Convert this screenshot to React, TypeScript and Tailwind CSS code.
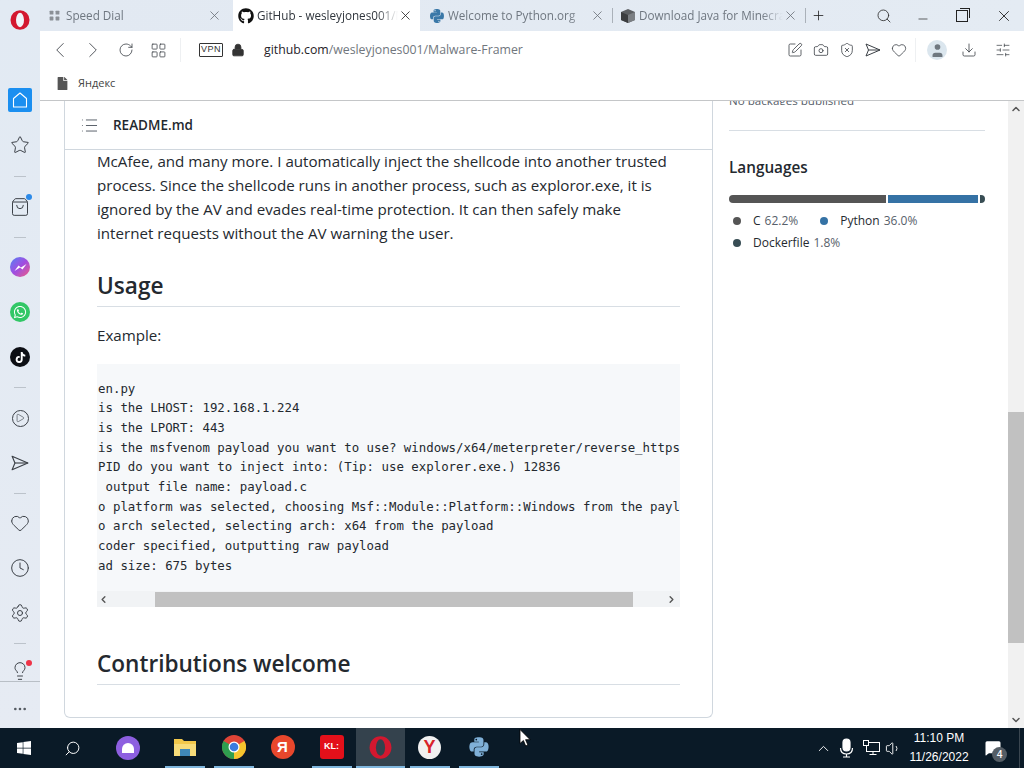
import {
  ChevronLeft, ChevronRight, RotateCw, LayoutGrid, Lock, Download, SlidersHorizontal, X, Plus, Search, Minus,
  Camera, ShieldX, Heart, Star, Clock, Settings, Lightbulb, MoreHorizontal, List, ChevronUp, ChevronDown,
  Volume1, MessageSquare, Play, ShoppingBag, SquarePen, User,
} from 'lucide-react'
import { FaGithub, FaWindows, FaWhatsapp, FaTiktok, FaPython, FaFile } from 'react-icons/fa'

const codeLines = [
  'en.py',
  'is the LHOST: 192.168.1.224',
  'is the LPORT: 443',
  'is the msfvenom payload you want to use? windows/x64/meterpreter/reverse_https',
  'PID do you want to inject into: (Tip: use explorer.exe.) 12836',
  ' output file name: payload.c',
  'o platform was selected, choosing Msf::Module::Platform::Windows from the payload',
  'o arch selected, selecting arch: x64 from the payload',
  'coder specified, outputting raw payload',
  'ad size: 675 bytes',
]

function OperaLogo({ size = 20, hole = '#f0f4f9' }: { size?: number; hole?: string }) {
  return (
    <svg width={size} height={size} viewBox="0 0 20 20">
      <ellipse cx="10" cy="10" rx="9.5" ry="9.8" fill="#d3182f" />
      <ellipse cx="10" cy="10" rx="4" ry="7.2" fill={hole} />
    </svg>
  )
}

function PlaneIcon({ size }: { size: number }) {
  return (
    <svg width={size} height={size} viewBox="0 0 16 16" fill="none" stroke="#3a3f45" strokeWidth="1" strokeLinejoin="round">
      <path d="M1 2l14 6-14 6 2.5-6z" />
      <path d="M3.5 8H15" />
    </svg>
  )
}

function Tab({ icon, title, pad, grey, active }: { icon: React.ReactNode; title: string; pad: string; grey?: boolean; active?: boolean }) {
  return (
    <div className={`flex h-full items-center ${pad} ${active ? 'ml-px w-[187px] bg-white' : 'w-[192px]'}`}>
      <div className="flex w-[17px] shrink-0 justify-center">{icon}</div>
      <span
        className={`ml-[3px] min-w-0 flex-1 overflow-hidden whitespace-nowrap text-[11.7px] [mask-image:linear-gradient(to_right,black_85%,transparent)] ${
          grey ? 'text-[#6f7780]' : 'text-[#30363d]'
        }`}
      >
        {title}
      </span>
      <X size={15} strokeWidth={1.3} className={active ? 'text-[#222]' : 'text-[#6a7078]'} />
    </div>
  )
}

function Cube() {
  return (
    <svg width="16" height="16" viewBox="0 0 16 16">
      <path d="M8 1l7 3v8l-7 3-7-3V4z" fill="#5c5f62" />
      <path d="M8 7l7-3v8l-7 3z" fill="#7b7f83" />
      <path d="M1 4l7 3v8l-7-3z" fill="#3c3e40" />
    </svg>
  )
}

function SideItem({ children, h = 'h-[45px]' }: { children: React.ReactNode; h?: string }) {
  return <div className={`flex w-full shrink-0 items-center justify-center ${h}`}>{children}</div>
}

function Sep({ h }: { h: string }) {
  return (
    <div className={`flex w-full shrink-0 items-center justify-center ${h}`}>
      <div className="h-px w-[12px] bg-[#bcc3cb]" />
    </div>
  )
}

function Sidebar() {
  const line = 'text-[#3c4148]'
  return (
    <div className="flex h-full w-[40px] shrink-0 flex-col items-center bg-gradient-to-b from-[#e2eaf3] to-[#e6ebf3]">
      <SideItem h="h-[40px]">
        <OperaLogo />
      </SideItem>
      <div className="h-[37.5px] shrink-0" />
      <SideItem>
        <div className="flex h-[24px] w-[24px] items-center justify-center rounded-[2px] bg-[#1b8ff0]">
          <svg width="18" height="18" viewBox="0 0 18 18" fill="none" stroke="#fff" strokeWidth="1.1" strokeLinejoin="round">
            <path d="M9 2l6.5 5.5V16h-13V7.5z" />
          </svg>
        </div>
      </SideItem>
      <SideItem>
        <Star size={20} strokeWidth={1.2} className={line} />
      </SideItem>
      <Sep h="h-[17px]" />
      <SideItem>
        <div className="relative">
          <ShoppingBag size={20} strokeWidth={1.2} className={line} />
          <div className="absolute right-[-2px] top-[-3px] h-[6px] w-[6px] rounded-full bg-[#2c8ae8]" />
        </div>
      </SideItem>
      <Sep h="h-[15px]" />
      <SideItem>
        <div className="flex h-[20px] w-[20px] items-center justify-center rounded-full bg-gradient-to-br from-[#3f7df5] via-[#a04be0] to-[#f0507c]">
          <svg width="13" height="9" viewBox="0 0 13 9">
            <path d="M0.5 8L4.5 2.5 7 4.5 12.5 1 8.5 6.5 6 4.5z" fill="#fff" />
          </svg>
        </div>
      </SideItem>
      <SideItem>
        <div className="flex h-[20px] w-[20px] items-center justify-center rounded-full bg-[#32c766]">
          <FaWhatsapp size={14} className="text-white" />
        </div>
      </SideItem>
      <SideItem>
        <div className="flex h-[20px] w-[20px] items-center justify-center rounded-full bg-[#0d0f14]">
          <FaTiktok size={11} className="text-white" />
        </div>
      </SideItem>
      <Sep h="h-[16px]" />
      <SideItem>
        <div className="flex h-[17px] w-[17px] items-center justify-center rounded-full border-[1.2px] border-[#3c4148]">
          <Play size={10} strokeWidth={1.5} className={line} />
        </div>
      </SideItem>
      <SideItem>
        <PlaneIcon size={18} />
      </SideItem>
      <Sep h="h-[15px]" />
      <SideItem>
        <Heart size={20} strokeWidth={1.2} className={line} />
      </SideItem>
      <SideItem>
        <Clock size={20} strokeWidth={1.2} className={line} />
      </SideItem>
      <SideItem>
        <Settings size={20} strokeWidth={1.2} className={line} />
      </SideItem>
      <Sep h="h-[15px]" />
      <div className="flex h-[30.5px] w-full shrink-0 items-end justify-center overflow-hidden">
        <div className="relative">
          <Lightbulb size={20} strokeWidth={1.2} className={line} />
          <div className="absolute right-[-2px] top-[-1px] h-[6px] w-[6px] rounded-full bg-[#ee3347]" />
        </div>
      </div>
      <div className="flex h-[47px] w-full shrink-0 items-center justify-center border-t border-[#b9bfc6] pt-[7px]">
        <MoreHorizontal size={16} strokeWidth={2} className="text-[#555b62]" />
      </div>
    </div>
  )
}

function TabBar() {
  return (
    <div className="flex h-[31px] shrink-0 items-center bg-gradient-to-r from-[#e2e9f2] to-[#e4ebf3]">
      <Tab pad="pl-[6px] pr-[10px]" icon={<LayoutGrid size={13} fill="#8b9096" strokeWidth={0} />} title="Speed Dial" grey />
      <Tab pad="pl-[4px] pr-[7px]" icon={<FaGithub size={16} className="text-[#111]" />} title="GitHub - wesleyjones001/Malware-Framer" active />
      <Tab pad="pl-[8px] pr-[7px]" icon={<FaPython size={16} className="text-[#3a78a8]" />} title="Welcome to Python.org" grey />
      <div className="h-[15px] w-px bg-[#aab1b9]" />
      <Tab pad="pl-[6px] pr-[7px]" icon={<Cube />} title="Download Java for Minecraft" grey />
      <div className="h-[15px] w-px bg-[#aab1b9]" />
      <Plus size={15} strokeWidth={1.3} className="ml-[5px] text-[#222]" />
      <div className="flex-1" />
      <Search size={16} strokeWidth={1.3} className="mr-[24px] text-[#333]" />
      <Minus size={14} strokeWidth={1.2} className="mr-[26px] mt-[6px] text-[#222]" />
      <div className="mr-[27px] h-[12px] w-[12px] border border-[#222] shadow-[2px_-2px_0_-1px_#e4ebf3,3px_-3px_0_-1px_#222]" />
      <X size={18} strokeWidth={1.2} className="mr-[11px] text-[#222]" />
    </div>
  )
}

function Toolbar() {
  const ic = 'text-[#3a3f45]'
  return (
    <div className="flex h-[38px] shrink-0 items-center bg-white pl-[7px]">
      <ChevronLeft size={26} strokeWidth={0.8} className={ic} />
      <ChevronRight size={26} strokeWidth={0.8} className={`${ic} ml-[7px]`} />
      <RotateCw size={16} strokeWidth={1.2} className={`${ic} ml-[12px]`} />
      <LayoutGrid size={17} strokeWidth={1.1} className={`${ic} ml-[16px]`} />
      <div className="ml-[13px] h-[24px] w-px bg-[#eef0f2]" />
      <div className="ml-[18px] flex h-[14px] w-[24px] items-center justify-center rounded-[1px] border border-[#333] font-['Liberation_Sans',sans-serif] text-[9px] tracking-[0.5px] text-[#333]">
        VPN
      </div>
      <Lock size={14} fill="#333" strokeWidth={1.4} className="ml-[8px] text-[#333]" />
      <div className="ml-[19px] whitespace-nowrap text-[12.3px]">
        <span className="text-[#1f2328]">github.com</span>
        <span className="text-[#70767d]">/wesleyjones001/Malware-Framer</span>
      </div>
      <div className="flex-1" />
      <SquarePen size={16} strokeWidth={1.2} className={`${ic} mr-[10px]`} />
      <Camera size={16} strokeWidth={1.2} className={`${ic} mr-[10px]`} />
      <ShieldX size={16} strokeWidth={1.2} className={`${ic} mr-[10px]`} />
      <div className="mr-[10px]">
        <PlaneIcon size={16} />
      </div>
      <Heart size={16} strokeWidth={1.2} className={`${ic} mr-[8px]`} />
      <div className="h-[24px] w-px bg-[#eef0f2]" />
      <div className="ml-[11px] flex h-[20px] w-[20px] items-center justify-center rounded-full bg-[#dbe6ee]">
        <User size={17} fill="#6f7880" strokeWidth={0} />
      </div>
      <Download size={16} strokeWidth={1.2} className={`${ic} ml-[14px]`} />
      <SlidersHorizontal size={16} strokeWidth={1.1} className={`${ic} ml-[18px] mr-[13px]`} />
    </div>
  )
}

function ReadmeCard() {
  return (
    <div className="min-w-0 flex-1 overflow-hidden">
      <div className="ml-[24px] h-[617px] overflow-hidden rounded-b-[6px] border-x border-b border-[#d0d7de] bg-white">
        <div className="flex h-[49px] items-center border-b border-[#d0d7de] pl-[14.5px] pt-px">
          <List size={19} strokeWidth={1.1} className="text-[#444c56]" />
          <span className="ml-[14.5px] text-[13.5px] font-semibold text-[#24292f]">README.md</span>
        </div>
        <div className="-mt-px px-[32px] text-[15.15px] leading-[24px] text-[#24292f]">
          <p>McAfee, and many more. I automatically inject the shellcode into another trusted</p>
          <p>process. Since the shellcode runs in another process, such as exploror.exe, it is</p>
          <p>ignored by the AV and evades real-time protection. It can then safely make</p>
          <p>internet requests without the AV warning the user.</p>
          <h2 className="mt-[24px] h-[38px] border-b border-[#d8dee4] text-[22.6px] font-semibold leading-[34px]">Usage</h2>
          <p className="mt-[16px]">Example:</p>
          <div className="mt-[17px] h-[243px] overflow-hidden bg-[#f6f8fa]">
            <div className="h-[227px] overflow-hidden pl-px pt-[14.5px] font-['DejaVu_Sans_Mono',monospace] text-[12.4px] leading-[19.7px] text-[#24292f]">
              {codeLines.map(l => (
                <div key={l} className="h-[19.7px] whitespace-pre">{l}</div>
              ))}
            </div>
            <div className="flex h-[16px] items-center bg-[#f1f3f5]">
              <ChevronLeft size={11} strokeWidth={3} className="ml-px text-[#555]" />
              <div className="ml-[46px] h-[15px] w-[478px] bg-[#c1c1c1]" />
              <div className="flex-1" />
              <ChevronRight size={11} strokeWidth={3} className="mr-[3px] text-[#555]" />
            </div>
          </div>
          <h2 className="mt-[40px] h-[38px] border-b border-[#d8dee4] text-[22.6px] font-semibold leading-[34px]">Contributions welcome</h2>
        </div>
      </div>
    </div>
  )
}

function Aside() {
  return (
    <div className="w-[295px] shrink-0 px-[16px] text-[#24292f]">
      <div className="flex h-[4px] items-end overflow-hidden text-[11.6px] leading-[8px] text-[#57606a]">No packages published</div>
      <div className="mt-[25px] h-px w-[256px] bg-[#d8dee4]" />
      <div className="mt-[25px] text-[15.3px] font-semibold leading-[22px]">Languages</div>
      <div className="mt-[17px] flex h-[8px] w-[256px] gap-[2px] overflow-hidden rounded-full">
        <div className="w-[157px] bg-[#555555]" />
        <div className="w-[90px] bg-[#3572a5]" />
        <div className="flex-1 bg-[#384d54]" />
      </div>
      <div className="mt-[7px] flex h-[22px] items-center pl-[4px] text-[12px]">
        <div className="h-[8px] w-[8px] rounded-full bg-[#555555]" />
        <span className="ml-[12px] font-medium">C</span>
        <span className="ml-[4px] text-[#57606a]">62.2%</span>
        <div className="ml-[22px] h-[8px] w-[8px] rounded-full bg-[#3572a5]" />
        <span className="ml-[12px] font-medium">Python</span>
        <span className="ml-[4px] text-[#57606a]">36.0%</span>
      </div>
      <div className="flex h-[22px] items-center pl-[4px] text-[12px]">
        <div className="h-[8px] w-[8px] rounded-full bg-[#384d54]" />
        <span className="ml-[12px] font-medium">Dockerfile</span>
        <span className="ml-[4px] text-[#57606a]">1.8%</span>
      </div>
    </div>
  )
}

function PageScrollbar() {
  return (
    <div className="flex h-full w-[16px] shrink-0 flex-col items-center bg-[#f1f1f1]">
      <ChevronUp size={12} strokeWidth={3} className="mt-[2px] text-[#555]" />
      <div className="mt-[297px] h-[231px] w-full bg-[#c1c1c1]" />
      <div className="flex-1" />
      <ChevronDown size={12} strokeWidth={3} className="mb-[2px] text-[#555]" />
    </div>
  )
}

function TaskIcon({ children, on, active }: { children: React.ReactNode; on?: boolean; active?: boolean }) {
  return (
    <div className={`flex h-full w-[49px] shrink-0 flex-col items-center ${active ? 'bg-[#34424d]' : ''}`}>
      <div className="flex flex-1 items-center justify-center">{children}</div>
      <div className={`h-[2px] ${active ? 'w-full' : 'w-[40px]'} ${on ? 'bg-[#7fb6dd]' : ''}`} />
    </div>
  )
}

function Taskbar() {
  return (
    <div className="relative flex h-[40px] w-full shrink-0 items-center bg-[#0a1a27] text-white">
      <div className="flex h-full w-[48px] items-center justify-center">
        <FaWindows size={16} />
      </div>
      <div className="flex h-full w-[48px] items-center justify-center">
        <Search size={17} strokeWidth={1.4} className="-scale-x-100" />
      </div>
      <div className="ml-[7px]">
        <div className="flex h-[40px] w-[49px] items-center justify-center">
          <div className="flex h-[24px] w-[24px] items-center justify-center rounded-full bg-[#8d5fe0]">
            <div className="h-[10px] w-[12px] rounded-b-[4px] rounded-t-full bg-white" />
          </div>
        </div>
      </div>
      <div className="ml-[8px] flex h-full">
        <TaskIcon on>
          <svg width="22" height="20" viewBox="0 0 22 20">
            <path d="M0 2h8l2 2h12v15H0z" fill="#f2c84b" />
            <rect y="7" width="22" height="12" fill="#f7dc7a" />
            <rect x="6" y="12" width="10" height="7" fill="#3f87b8" />
          </svg>
        </TaskIcon>
        <TaskIcon on>
          <svg width="24" height="24" viewBox="0 0 24 24">
            <circle cx="12" cy="12" r="12" fill="#de4437" />
            <path d="M12 12L12 24A12 12 0 0 0 22.4 6z" fill="#f6c52d" />
            <path d="M12 12L1.6 6A12 12 0 0 0 12 24z" fill="#2f9e4f" />
            <circle cx="12" cy="12" r="5.5" fill="#fff" />
            <circle cx="12" cy="12" r="4.3" fill="#3b7ce0" />
          </svg>
        </TaskIcon>
        <TaskIcon>
          <div className="flex h-[24px] w-[24px] items-center justify-center rounded-full bg-[#e8472c] font-['Liberation_Sans',sans-serif] text-[15px] font-bold text-white">
            Я
          </div>
        </TaskIcon>
        <TaskIcon on>
          <div className="flex h-[24px] w-[24px] items-center justify-center rounded-[3px] bg-[#e3101a] font-['Liberation_Sans',sans-serif] text-[9px] font-bold text-white">
            KL:
          </div>
        </TaskIcon>
        <TaskIcon on active>
          <OperaLogo size={23} hole="#34424d" />
        </TaskIcon>
        <TaskIcon on>
          <div className="flex h-[23px] w-[23px] items-center justify-center rounded-full bg-[#f1f1f1] font-['Liberation_Sans',sans-serif] text-[18px] font-bold text-[#d8232a]">
            Y
          </div>
        </TaskIcon>
        <TaskIcon on>
          <FaPython size={22} className="text-[#7fb0d8]" />
        </TaskIcon>
      </div>
      {/* mouse pointer sits over the bar */}
      <svg className="absolute left-[519px] top-[1px]" width="12" height="18" viewBox="0 0 12 18">
        <path d="M1 0.5v14l3.4-3 2.3 5.5 2.2-1-2.3-5.3h4.6z" fill="#fff" stroke="#000" strokeWidth="0.8" />
      </svg>
      <div className="flex-1" />
      <ChevronUp size={17} strokeWidth={1.3} />
      <svg className="ml-[6px]" width="17" height="20" viewBox="0 0 17 20" fill="none" stroke="#fff" strokeWidth="1.2">
        <rect x="5" y="1" width="7" height="12" rx="3.5" fill="#fff" />
        <path d="M2.5 10c0 4 2.5 6 6 6s6-2 6-6M8.5 16v3M5 19h7" />
      </svg>
      <svg className="ml-[8px]" width="17" height="17" viewBox="0 0 17 17" fill="none" stroke="#fff" strokeWidth="1">
        <rect x="3.5" y="2.5" width="13" height="9" />
        <path d="M10 11.5v3M6.5 14.5h7" />
        <rect x="0.5" y="0.5" width="5" height="5" fill="#0a1a27" />
      </svg>
      <Volume1 size={17} strokeWidth={1.3} className="ml-[5px]" />
      <div className="ml-[2.5px] w-[70px] text-center font-['Liberation_Sans',sans-serif] text-[12px] leading-[19px]">
        <div>11:10 PM</div>
        <div>11/26/2022</div>
      </div>
      <div className="relative ml-[10px] mr-[17px]">
        <MessageSquare size={18} fill="#fff" strokeWidth={0} />
        <div className="absolute left-[8px] top-[8px] flex h-[15px] w-[15px] items-center justify-center rounded-full bg-[#555e66] text-[10px] font-semibold">4</div>
      </div>
      <div className="mr-[4px] h-full w-px bg-[#3a4650]" />
    </div>
  )
}

export default function App() {
  return (
    <div className="flex h-[768px] w-[1024px] flex-col overflow-hidden bg-white font-['Open_Sans',sans-serif]">
      <div className="flex h-[728px] shrink-0">
        <Sidebar />
        <div className="flex min-w-0 flex-1 flex-col">
          <TabBar />
          <Toolbar />
          <div className="flex h-[32px] shrink-0 items-center border-b border-[#c4c6c8] bg-white pb-[2px] pl-[16px]">
            <FaFile size={13} className="text-[#555]" />
            <span className="ml-[9px] text-[11px] text-[#444]">Яндекс</span>
          </div>
          <div className="flex min-h-0 flex-1">
            <ReadmeCard />
            <Aside />
            <PageScrollbar />
          </div>
        </div>
      </div>
      <Taskbar />
    </div>
  )
}
